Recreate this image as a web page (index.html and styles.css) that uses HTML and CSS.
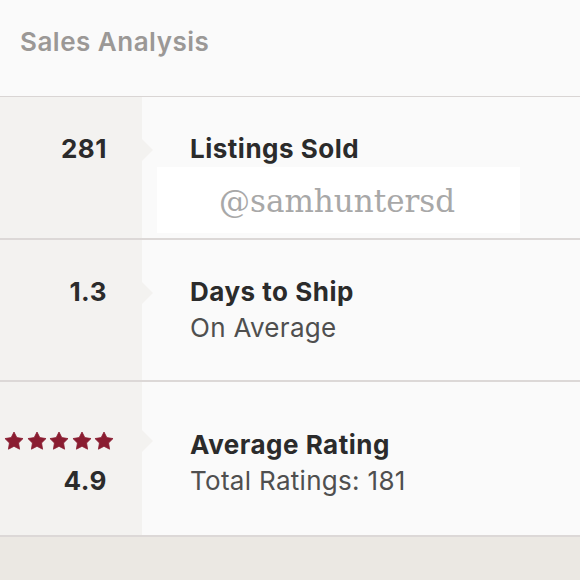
FILE: index.html
```html
<!DOCTYPE html>
<html>
<head>
<meta charset="utf-8">
<link rel="stylesheet" href="styles.css">
</head>
<body>
<div class="page">
  <header class="head">Sales Analysis</header>
  <section class="rows">
    <div class="row">
      <div class="left"><div class="num">281</div></div>
      <div class="right">
        <div class="title">Listings Sold</div>
        <div class="sub">&nbsp;</div>
        <div class="mark">@samhuntersd</div>
      </div>
    </div>
    <div class="row">
      <div class="left"><div class="num">1.3</div></div>
      <div class="right">
        <div class="title">Days to Ship</div>
        <div class="sub">On Average</div>
      </div>
    </div>
    <div class="row row-rating">
      <div class="left">
        <div class="stars">
          <svg viewBox="0 0 20 20"><polygon points="10,1 12.82,6.62 19.03,7.56 14.57,11.98 15.58,18.19 10,15.3 4.42,18.19 5.43,11.98 0.97,7.56 7.18,6.62"/></svg>
          <svg viewBox="0 0 20 20"><polygon points="10,1 12.82,6.62 19.03,7.56 14.57,11.98 15.58,18.19 10,15.3 4.42,18.19 5.43,11.98 0.97,7.56 7.18,6.62"/></svg>
          <svg viewBox="0 0 20 20"><polygon points="10,1 12.82,6.62 19.03,7.56 14.57,11.98 15.58,18.19 10,15.3 4.42,18.19 5.43,11.98 0.97,7.56 7.18,6.62"/></svg>
          <svg viewBox="0 0 20 20"><polygon points="10,1 12.82,6.62 19.03,7.56 14.57,11.98 15.58,18.19 10,15.3 4.42,18.19 5.43,11.98 0.97,7.56 7.18,6.62"/></svg>
          <svg viewBox="0 0 20 20"><polygon points="10,1 12.82,6.62 19.03,7.56 14.57,11.98 15.58,18.19 10,15.3 4.42,18.19 5.43,11.98 0.97,7.56 7.18,6.62"/></svg>
        </div>
        <div class="num">4.9</div>
      </div>
      <div class="right">
        <div class="title">Average Rating</div>
        <div class="sub">Total Ratings: 181</div>
      </div>
    </div>
  </section>
  <div class="floor"></div>
</div>
</body>
</html>
```

FILE: styles.css
```css
* { box-sizing: border-box; }
html, body { margin: 0; padding: 0; }
body {
  width: 580px;
  height: 580px;
  overflow: hidden;
  background: #ebe8e3;
  font-family: "Inter", "Lato", sans-serif;
}
.page { display: flex; flex-direction: column; height: 580px; }
.head {
  height: 97px;
  background: #fafafa;
  border-bottom: 1px solid #d9d5d4;
  padding: 27px 0 0 20px;
  font-size: 26px;
  font-weight: 600;
  color: #9b9896;
  line-height: 30px;
  letter-spacing: 0.5px;
}
.rows { display: flex; flex-direction: column; }
.row {
  display: flex;
  height: 143px;
  border-bottom: 2px solid #dcd8d7;
  background: #fafafa;
}
.row + .row { height: 142px; }
.row.row-rating { height: 155px; }
.left {
  position: relative;
  width: 142px;
  background: #f3f2f0;
  padding: 34px 35px 0 0;
  text-align: right;
  display: flex;
  flex-direction: column;
  align-items: flex-end;
}
.left::after {
  content: "";
  position: absolute;
  right: -11px;
  top: 42px;
  border-left: 11px solid #f3f2f0;
  border-top: 11px solid transparent;
  border-bottom: 11px solid transparent;
}
.row-rating .left { padding-top: 45px; }
.row-rating .left::after { top: 48px; }
.num {
  font-size: 26px;
  font-weight: 700;
  color: #2b2b2b;
  line-height: 36px;
  height: 36px;
  letter-spacing: 0.5px;
}
.stars {
  display: flex;
  gap: 2.5px;
  height: 36px;
  align-items: flex-start;
  padding-top: 4px;
  margin-right: -7px;
}
.stars svg {
  width: 20px;
  height: 20px;
  fill: #8a1d31;
  stroke: #8a1d31;
  stroke-width: 0.8;
  stroke-linejoin: round;
}
.right {
  position: relative;
  flex: 1;
  padding: 34px 0 0 48px;
}
.row-rating .right { padding-top: 45px; }
.title {
  font-size: 26px;
  font-weight: 700;
  color: #2b2b2b;
  line-height: 36px;
  letter-spacing: 0.5px;
}
.sub {
  font-size: 26px;
  font-weight: 400;
  color: #4f4f4f;
  line-height: 36px;
  letter-spacing: 0.3px;
}
.mark {
  position: absolute;
  left: 15px;
  top: 70px;
  width: 363px;
  height: 66px;
  background: #ffffff;
  font-family: "DejaVu Serif", serif;
  font-size: 31px;
  color: #a8a8a8;
  padding: 14px 0 0 62px;
  line-height: 40px;
}
.floor { flex: 1; background: #ebe8e3; }
```
